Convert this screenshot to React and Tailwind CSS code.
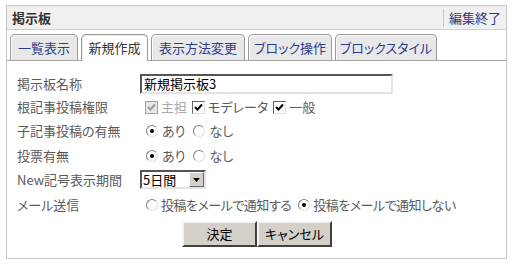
import React from "react";

const font = { fontFamily: '"Noto Sans CJK JP", "Noto Sans", sans-serif' };

function Check({ disabled }) {
  return (
    <span
      className={`inline-flex w-[13px] h-[13px] items-center justify-center border ${
        disabled ? "border-[#a0a0a0] bg-[#e6e6e6]" : "border-t-[#666] border-l-[#666] border-b-[#ddd] border-r-[#ddd] bg-white"
      }`}
    >
      <svg width="9" height="9" viewBox="0 0 9 9">
        <path
          d="M1 4 L3.5 6.5 L8 1.5"
          fill="none"
          stroke={disabled ? "#9a9a9a" : "#000"}
          strokeWidth="2"
        />
      </svg>
    </span>
  );
}

function Radio({ on }) {
  return (
    <span className="inline-flex w-[12px] h-[12px] rounded-full items-center justify-center border border-t-[#808080] border-l-[#808080] border-b-[#e0e0e0] border-r-[#e0e0e0] bg-white">
      {on && <span className="w-[4px] h-[4px] rounded-full bg-black" />}
    </span>
  );
}

const tabs = [
  { t: "一覧表示", w: "w-[68px]" },
  { t: "新規作成", w: "w-[67px]", active: true },
  { t: "表示方法変更", w: "w-[94px]" },
  { t: "ブロック操作", w: "w-[84px]" },
  { t: "ブロックスタイル", w: "w-[102px]" },
];

export default function App() {
  return (
    <div className="w-[516px] h-[265px] bg-white pt-[5px] pl-[6px] [font-feature-settings:'palt']" style={font}>
      <div className="w-[501px] h-[254px] border border-[#c6c6c6] flex flex-col">
        <div className="h-[24px] bg-[#f0f0f0] border-b border-[#d0d0d0] flex items-center justify-between">
          <span className="pl-[5px] text-[13px] font-bold text-[#333]">掲示板</span>
          <span className="h-[18px] border-l border-[#c8c8c8] px-[5px] flex items-center text-[13px] text-[#2b3a7c]">
            編集終了
          </span>
        </div>
        <div className="flex items-end gap-[3px] pl-[3px] pt-[4px] border-b border-[#a8a8a8] h-[31px]">
          {tabs.map((tb) => (
            <div
              key={tb.t}
              className={`${tb.w} whitespace-nowrap rounded-t-[5px] border border-b-0 border-[#9a9a9a] flex items-center justify-center text-[13px] ${
                tb.active
                  ? "h-[27px] -mb-px bg-white text-[#333] shadow-[inset_1px_1px_0_#e8e8e8]"
                  : "h-[26px] bg-[#e8e8e8] text-[#2b3d8f] shadow-[inset_1px_1px_0_#fafafa]"
              }`}
            >
              {tb.t}
            </div>
          ))}
        </div>
        <div className="pl-[10px] pt-[12px] text-[13px] text-[#5a5a5a]">
          <div className="flex items-center h-[22px]">
            <span className="w-[123px]">掲示板名称</span>
            <div className="w-[253px] h-[20px] border-2 border-t-[#555] border-l-[#555] border-b-[#e4e4e4] border-r-[#e4e4e4] bg-white flex items-center pl-[2px] text-[13px] text-black">
              新規掲示板3
            </div>
          </div>
          <div className="flex items-center h-[24px]">
            <span className="w-[128px]">根記事投稿権限</span>
            <span className="flex items-center gap-[3px]">
              <Check disabled />
              <span className="text-[#a8a8a8] mr-[2px]">主担</span>
              <Check />
              <span className="mr-[2px]">モデレータ</span>
              <Check />
              <span>一般</span>
            </span>
          </div>
          <div className="flex items-center h-[24px]">
            <span className="w-[129px]">子記事投稿の有無</span>
            <span className="flex items-center gap-[4px]">
              <Radio on />
              <span className="mr-[4px]">あり</span>
              <Radio />
              <span>なし</span>
            </span>
          </div>
          <div className="flex items-center h-[25px]">
            <span className="w-[129px]">投票有無</span>
            <span className="flex items-center gap-[4px]">
              <Radio on />
              <span className="mr-[4px]">あり</span>
              <Radio />
              <span>なし</span>
            </span>
          </div>
          <div className="flex items-center h-[23px]">
            <span className="w-[123px]">New記号表示期間</span>
            <div className="w-[66px] h-[19px] border-2 border-t-[#555] border-l-[#555] border-b-[#e4e4e4] border-r-[#e4e4e4] bg-white flex items-center justify-between text-black">
              <span className="pl-[1px] text-[13px]">5日間</span>
              <span className="w-[15px] h-[15px] bg-[#d4d0c8] border border-t-[#fff] border-l-[#fff] border-b-[#666] border-r-[#666] flex items-center justify-center">
                <svg width="7" height="4" viewBox="0 0 7 4">
                  <path d="M0 0 H7 L3.5 4 Z" fill="#000" />
                </svg>
              </span>
            </div>
          </div>
          <div className="flex items-center h-[27px]">
            <span className="w-[129px]">メール送信</span>
            <span className="flex items-center gap-[3px] tracking-[-0.5px]">
              <Radio />
              <span className="mr-[4px]">投稿をメールで通知する</span>
              <Radio on />
              <span>投稿をメールで通知しない</span>
            </span>
          </div>
          <div className="flex pl-[165px] mt-[3px]">
            <button className="w-[75px] h-[26px] bg-[#d4d0c8] border-2 border-t-[#f4f4f4] border-l-[#f4f4f4] border-b-[#404040] border-r-[#404040] text-[13px] text-black">
              決定
            </button>
            <button className="w-[75px] h-[26px] bg-[#d4d0c8] border-2 border-t-[#f4f4f4] border-l-[#f4f4f4] border-b-[#404040] border-r-[#404040] text-[13px] text-black">
              キャンセル
            </button>
          </div>
        </div>
      </div>
    </div>
  );
}
